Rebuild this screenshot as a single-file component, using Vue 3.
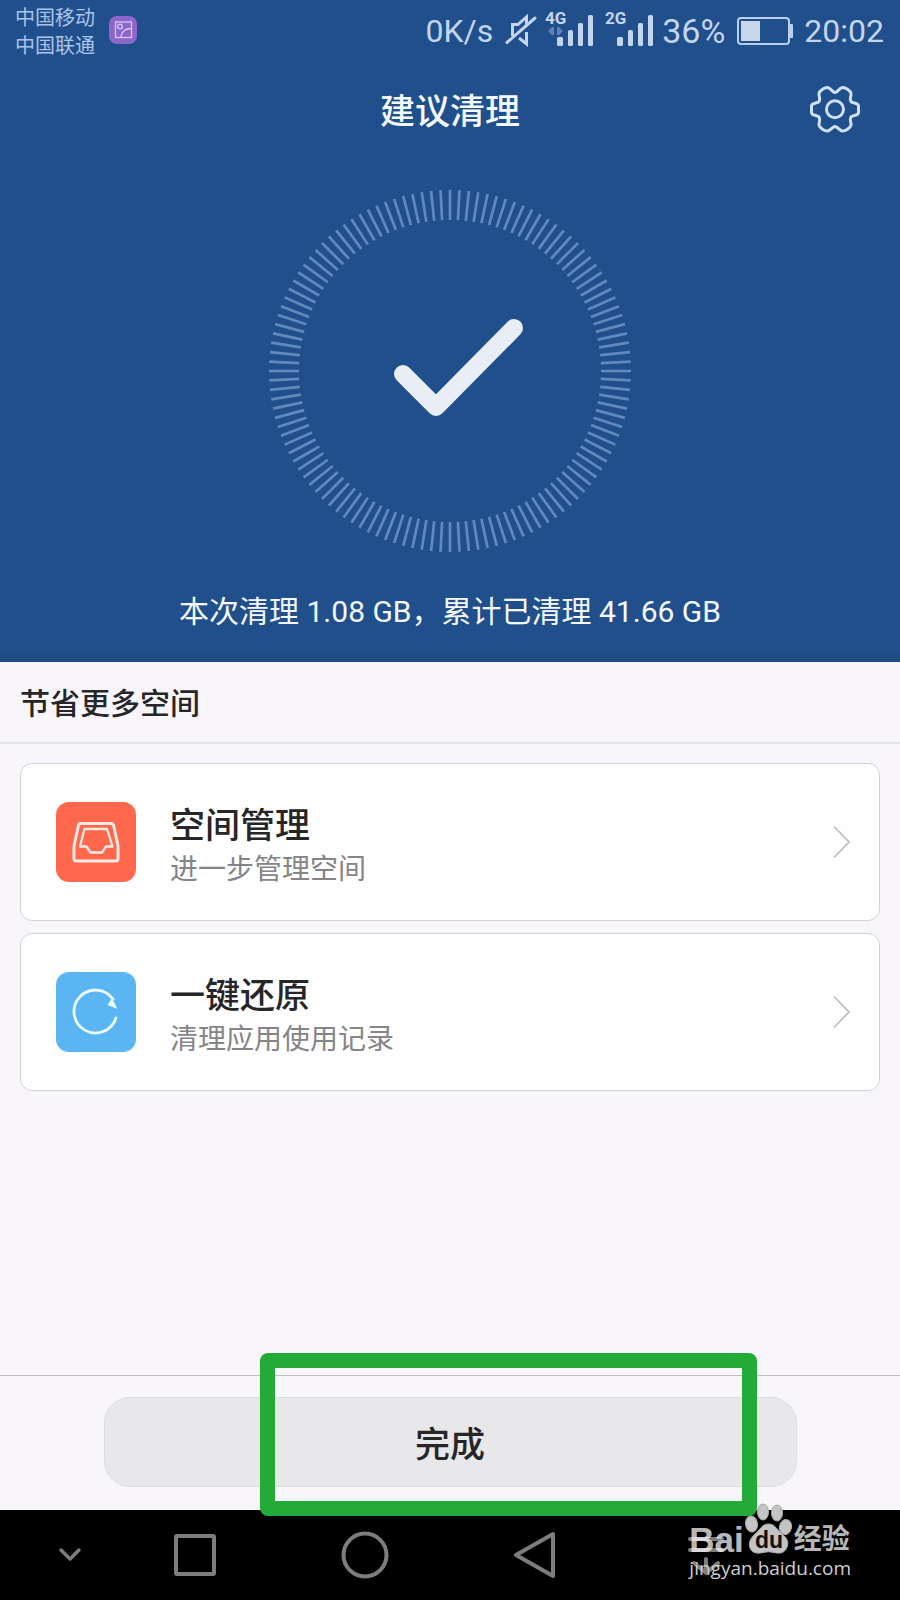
<template>
  <div class="page">
    <section class="hero">
      <div class="status">
        <div class="carriers">
          <span>中国移动</span>
          <span>中国联通</span>
        </div>
        <svg class="app-icon" width="28" height="28" viewBox="0 0 28 28" fill="none">
          <rect width="28" height="28" rx="8" fill="#8c66cb" />
          <g stroke="#d8c9f2" stroke-width="1.3">
            <rect x="6.5" y="6" width="16" height="15.5" />
            <circle cx="11" cy="10.5" r="2.3" />
            <path d="M11.5 21.5C12.5 16 16 12.5 22.5 12.5" />
          </g>
        </svg>
        <div class="indicators">
          <span class="speed">0K/s</span>
          <svg class="mute" width="32" height="34" viewBox="0 0 32 34" fill="none" stroke="#c3d5ef" stroke-width="3">
            <path d="M7.500 22V10.500H13L21.500 3V11M14 24L21.500 30V18" />
            <path d="M2 28.500L30 4" stroke-linecap="round" />
          </svg>
          <svg v-for="net in networks" :key="net" class="signal" width="50" height="48" viewBox="0 -4 50 48">
            <text x="0" y="13">{{ net }}</text>
            <g v-if="net === '4G'" fill="#5f83b8">
              <path d="M3 20L7 16V24ZM7 16H9V24H7Z" />
              <path d="M18 20L14 24V16ZM12 16H14V24H12Z" />
            </g>
            <g fill="#c3d5ef">
              <rect x="12" y="26" width="6" height="9" rx="1.500" />
              <rect x="23" y="19" width="5" height="16" rx="1.500" />
              <rect x="33" y="12" width="5" height="23" rx="1.500" />
              <rect x="43" y="4" width="5" height="31" rx="1.500" />
            </g>
          </svg>
          <span class="percent">36%</span>
          <svg class="battery" width="56" height="28" viewBox="0 0 56 28">
            <rect x="1" y="1" width="51" height="26" rx="3" fill="none" stroke="#b9cff2" stroke-width="2" />
            <rect x="4" y="4" width="19" height="20" fill="#c8d6e9" />
            <path d="M53 7H55Q56 7 56 8V20Q56 21 55 21H53Z" fill="#b9cff2" />
          </svg>
          <span>20:02</span>
        </div>
      </div>

      <header class="titlebar">
        <h1>建议清理</h1>
        <button class="settings" aria-label="设置">
          <svg width="50" height="50" viewBox="0 0 50 50" fill="none" stroke="#cfe0fa" stroke-width="3">
            <path :d="gear" stroke-linejoin="round" />
            <circle cx="25" cy="25.300" r="8.500" />
          </svg>
        </button>
      </header>

      <svg class="dial" width="362" height="362" viewBox="-181 -181 362 362" fill="none">
        <g stroke="#6189bd" stroke-width="2.7">
          <line v-for="n in 120" :key="n" y1="-181" y2="-151" :transform="`rotate(${n * 3})`" />
        </g>
        <path d="M-47 3L-14 36L64 -43" stroke="#e9eef6" stroke-width="18" stroke-linecap="round" stroke-linejoin="round" />
      </svg>
      <p class="summary">本次清理 1.08 GB，累计已清理 41.66 GB</p>
    </section>

    <main>
      <h2>节省更多空间</h2>
      <div class="cards">
        <button v-for="item in items" :key="item.title" class="card">
          <span class="card-icon" :class="item.icon">
            <svg v-if="item.icon === 'box'" width="80" height="80" viewBox="0 0 80 80" fill="none" stroke="#ffe9e4" stroke-linejoin="round">
              <path d="M23.500 21.500H56L57.500 23L62 44V56.500Q62 59 59.500 59H20.500Q18 59 18 56.500V44L22.500 23Z" stroke-width="3" />
              <path d="M28.500 27H51L56.500 44.500H50L46 50.500H34.500L30.500 44.500H24Z" stroke-width="2.300" />
            </svg>
            <svg v-else width="80" height="80" viewBox="0 0 80 80" fill="none">
              <path d="M60 46A21.500 21.500 0 1 1 57 27" stroke="#eaffff" stroke-width="2.800" stroke-linecap="round" />
              <path d="M56 26L61.500 37L51.500 33Z" fill="#eaffff" />
            </svg>
          </span>
          <span class="card-text">
            <span class="card-title">{{ item.title }}</span>
            <span class="card-note">{{ item.note }}</span>
          </span>
          <svg class="arrow" width="18" height="34" viewBox="0 0 18 34" fill="none" stroke="#bcbbbe" stroke-width="1.700">
            <path d="M1 1.500L16 17L1 32.500" />
          </svg>
        </button>
      </div>
    </main>

    <footer class="actions">
      <button class="done">完成</button>
      <div class="highlight"></div>
    </footer>

    <nav class="navbar">
      <button class="hide" aria-label="隐藏">
        <svg width="24" height="16" viewBox="0 0 24 16"><path d="M3 3L12 12L21 3" stroke-width="3.500" /></svg>
      </button>
      <button aria-label="最近">
        <svg width="46" height="50" viewBox="0 0 46 50"><rect x="4" y="6" width="38" height="38" rx="1" /></svg>
      </button>
      <button aria-label="主页">
        <svg width="50" height="50" viewBox="0 0 50 50"><circle cx="25" cy="25" r="21.500" /></svg>
      </button>
      <button aria-label="返回">
        <svg width="50" height="50" viewBox="0 0 50 50"><path d="M43 4V46L6 25Z" /></svg>
      </button>
      <button aria-label="通知">
        <svg width="40" height="44" viewBox="0 0 40 44"><path d="M5 6H37M5 17H37M21 26V40M9 30L21 40L33 30" /></svg>
      </button>
      <div class="watermark">
        <div class="brand">
          <span class="bai">Bai</span>
          <svg width="48" height="52" viewBox="0 0 48 52">
            <g class="paw">
              <ellipse cx="19" cy="10" rx="5.500" ry="8" />
              <ellipse cx="33" cy="11" rx="5.500" ry="8" />
              <ellipse cx="7.500" cy="22" rx="6" ry="8" transform="rotate(-8 7.500 22)" />
              <ellipse cx="41.500" cy="25" rx="6" ry="7.500" transform="rotate(12 41.500 25)" />
              <path d="M24.500 22C31 22 33 28 38 32C43 36 45 40 43 45C41 51 36 52 30 50.500Q24.500 49 19 50.500C13 52 8 51 6 46C4 40 7 36 11 32C16 28 18 22 24.500 22Z" />
            </g>
            <text x="25" y="46" text-anchor="middle">du</text>
          </svg>
          <span class="jingyan">经验</span>
        </div>
        <div class="url">jingyan.baidu.com</div>
      </div>
    </nav>
  </div>
</template>

<script setup>
const networks = ['4G', '2G'];

const items = [
  { icon: 'box', title: '空间管理', note: '进一步管理空间' },
  { icon: 'restore', title: '一键还原', note: '清理应用使用记录' },
];

const gear = [
  'M25 8.500C27.500 8.500 29 4 32.500 3.500C35 3.300 40.500 6.500 41 9.500',
  'C41.500 12 39 15 41 17.500C42.500 19.500 48.500 18.500 48.500 22V28.500',
  'C48.500 32 42.500 31 41 33C39 36 41.500 38.500 41 41C40.500 44 35 47.300 32.500 47',
  'C29 46.500 27.500 42.500 25 42.500C22.500 42.500 21 46.500 17.500 47',
  'C15 47.300 9.500 44 9 41C8.500 38.500 11 36 9 33C7.500 31 1.500 32 1.500 28.500V22',
  'C1.500 18.500 7.500 19.500 9 17.500C11 15 8.500 12 9 9.500',
  'C9.500 6.500 15 3.300 17.500 3.500C21 4 22.500 8.500 25 8.500Z',
].join('');
</script>

<style>
body {
  margin: 0;
  background: #f8f6fa;
}
</style>

<style scoped>
.page {
  min-height: 100vh;
  display: flex;
  flex-direction: column;
  background: #f8f6fa;
  color: #262527;
  font-family: Roboto, "Noto Sans CJK SC", sans-serif;
}

button {
  border: 0;
  padding: 0;
  background: none;
  color: inherit;
  font: inherit;
  cursor: pointer;
}

svg {
  display: block;
  flex: none;
}

h1,
h2,
p {
  margin: 0;
}

.hero {
  display: flex;
  flex-direction: column;
  align-items: center;
  padding-bottom: 26px;
  background: linear-gradient(#204f8c 98%, #1f4a80);
  color: #f4f9ff;
}

.status {
  align-self: stretch;
  display: flex;
  height: 60px;
  padding: 0 16px 0 15px;
  color: #c3d5ef;
}

.carriers {
  display: flex;
  flex-direction: column;
  padding-top: 4px;
  color: #a9c4ea;
  font-size: 20px;
  line-height: 28px;
}

.app-icon {
  margin: 16px 0 0 14px;
}

.indicators {
  display: flex;
  align-items: center;
  margin-left: auto;
  height: 62px;
  font-size: 32px;
}

.mute {
  margin-left: 12px;
}

.signal {
  margin-left: 8px;
}

.signal + .signal {
  margin-left: 10px;
}

.signal text {
  fill: #c3d5ef;
  font-size: 17px;
  font-weight: 700;
}

.percent {
  margin-left: 7px;
  font-size: 34px;
}

.battery {
  margin: 0 11px 0 12px;
}

.titlebar {
  align-self: stretch;
  display: grid;
  grid-template-columns: 1fr auto 1fr;
  align-items: center;
  height: 97px;
  padding: 0 40px;
}

h1 {
  grid-column: 2;
  padding-top: 8px;
  font-size: 35px;
  font-weight: 500;
  line-height: 48px;
}

.settings {
  justify-self: end;
}

.dial {
  margin-top: 33px;
}

.summary {
  margin-top: 36px;
  font-size: 30px;
  line-height: 48px;
}

main {
  flex: 1;
}

h2 {
  padding: 4px 20px 0;
  border-bottom: 2px solid #e4e3e6;
  font-size: 30px;
  font-weight: 500;
  line-height: 76px;
}

.cards {
  display: flex;
  flex-direction: column;
  gap: 12px;
  padding: 19px 20px;
}

.card {
  display: flex;
  align-items: center;
  height: 158px;
  padding: 0 28px 0 35px;
  border: 1px solid #d3d2d6;
  border-radius: 12px;
  background: #fefefe;
  text-align: left;
}

.card-icon {
  border-radius: 13px;
}

.box {
  background: #ff684d;
}

.restore {
  background: #5bb5f3;
}

.card-text {
  flex: 1;
  display: flex;
  flex-direction: column;
  margin-left: 34px;
  padding-top: 9px;
}

.card-title {
  font-size: 35px;
  font-weight: 500;
  line-height: 46px;
}

.card-note {
  color: #858487;
  font-size: 28px;
  line-height: 40px;
}

.actions {
  position: relative;
  display: flex;
  justify-content: center;
  padding: 21px 0 23px;
  border-top: 1px solid #bfbec2;
}

.done {
  width: 77%;
  height: 90px;
  padding-bottom: 2px;
  border: 1px solid #dddcdf;
  border-radius: 26px;
  background: #e8e7e9;
  font-size: 35px;
  font-weight: 500;
}

.highlight {
  position: absolute;
  z-index: 1;
  inset: -23px 143px -6px 260px;
  border: 15px solid #23aa37;
  border-radius: 8px;
  pointer-events: none;
}

.navbar {
  position: relative;
  display: grid;
  grid-template-columns: 11fr 17fr 17fr 17fr 17fr 11fr;
  align-items: center;
  height: 90px;
  background: #000;
}

.navbar button {
  display: flex;
  justify-content: center;
}

.navbar .hide {
  padding-left: 30px;
}

.navbar button svg {
  fill: none;
  stroke: #7d7d7d;
  stroke-width: 4;
  stroke-linejoin: round;
  stroke-linecap: round;
}

.watermark {
  position: absolute;
  right: 49px;
  bottom: 18px;
  z-index: 2;
  color: rgba(255, 255, 255, 0.74);
}

.brand {
  display: flex;
  align-items: flex-end;
  line-height: 28px;
}

.bai {
  font-family: "Liberation Sans", sans-serif;
  font-size: 35px;
  font-weight: 700;
}

.paw {
  fill: #c4c4c4;
  stroke: #a9a9a9;
}

.brand text {
  fill: #111;
  font-family: "Liberation Sans", sans-serif;
  font-size: 23px;
  font-weight: 700;
}

.jingyan {
  margin-left: 2px;
  font-size: 28px;
  font-weight: 700;
}

.url {
  color: #cfcfcf;
  font-family: "Open Sans", sans-serif;
  font-size: 19px;
  line-height: 28px;
}
</style>
